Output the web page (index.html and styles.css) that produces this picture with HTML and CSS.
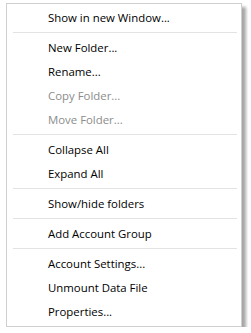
FILE: index.html
```html
<!DOCTYPE html>
<html lang="en">

<head>
    <meta charset="UTF-8">
    <title>Folder menu</title>
    <link rel="stylesheet" href="styles.css">
</head>

<body>
    <ul class="menu">
        <li class="item">Show in new Window...</li>
        <li class="sep"></li>
        <li class="item">New Folder...</li>
        <li class="item">Rename...</li>
        <li class="item disabled">Copy Folder...</li>
        <li class="item disabled">Move Folder...</li>
        <li class="sep"></li>
        <li class="item">Collapse All</li>
        <li class="item">Expand All</li>
        <li class="sep"></li>
        <li class="item">Show/hide folders</li>
        <li class="sep"></li>
        <li class="item">Add Account Group</li>
        <li class="sep"></li>
        <li class="item">Account Settings...</li>
        <li class="item">Unmount Data File</li>
        <li class="item">Properties...</li>
    </ul>
</body>

</html>
```

FILE: styles.css
```css
body {
    margin: 0;
    background-color: #fff;
}

.menu {
    list-style: none;
    margin: 3px 0 0 6px;
    padding: 2px 0;
    width: 234px;
    background-color: #fff;
    border: 1px solid #cfcfcf;
    box-shadow: 4px 4px 3px rgba(0, 0, 0, 0.35);
    font-family: "Open Sans", "Noto Sans", sans-serif;
    font-size: 11.4px;
    color: #000;
}

.item {
    height: 24px;
    line-height: 24px;
    padding-left: 41px;
    white-space: nowrap;
}

.disabled {
    color: #8c8c8c;
}

.sep {
    height: 1px;
    margin: 2px 4px 3px 6px;
    background-color: #e3e3e3;
}
```
